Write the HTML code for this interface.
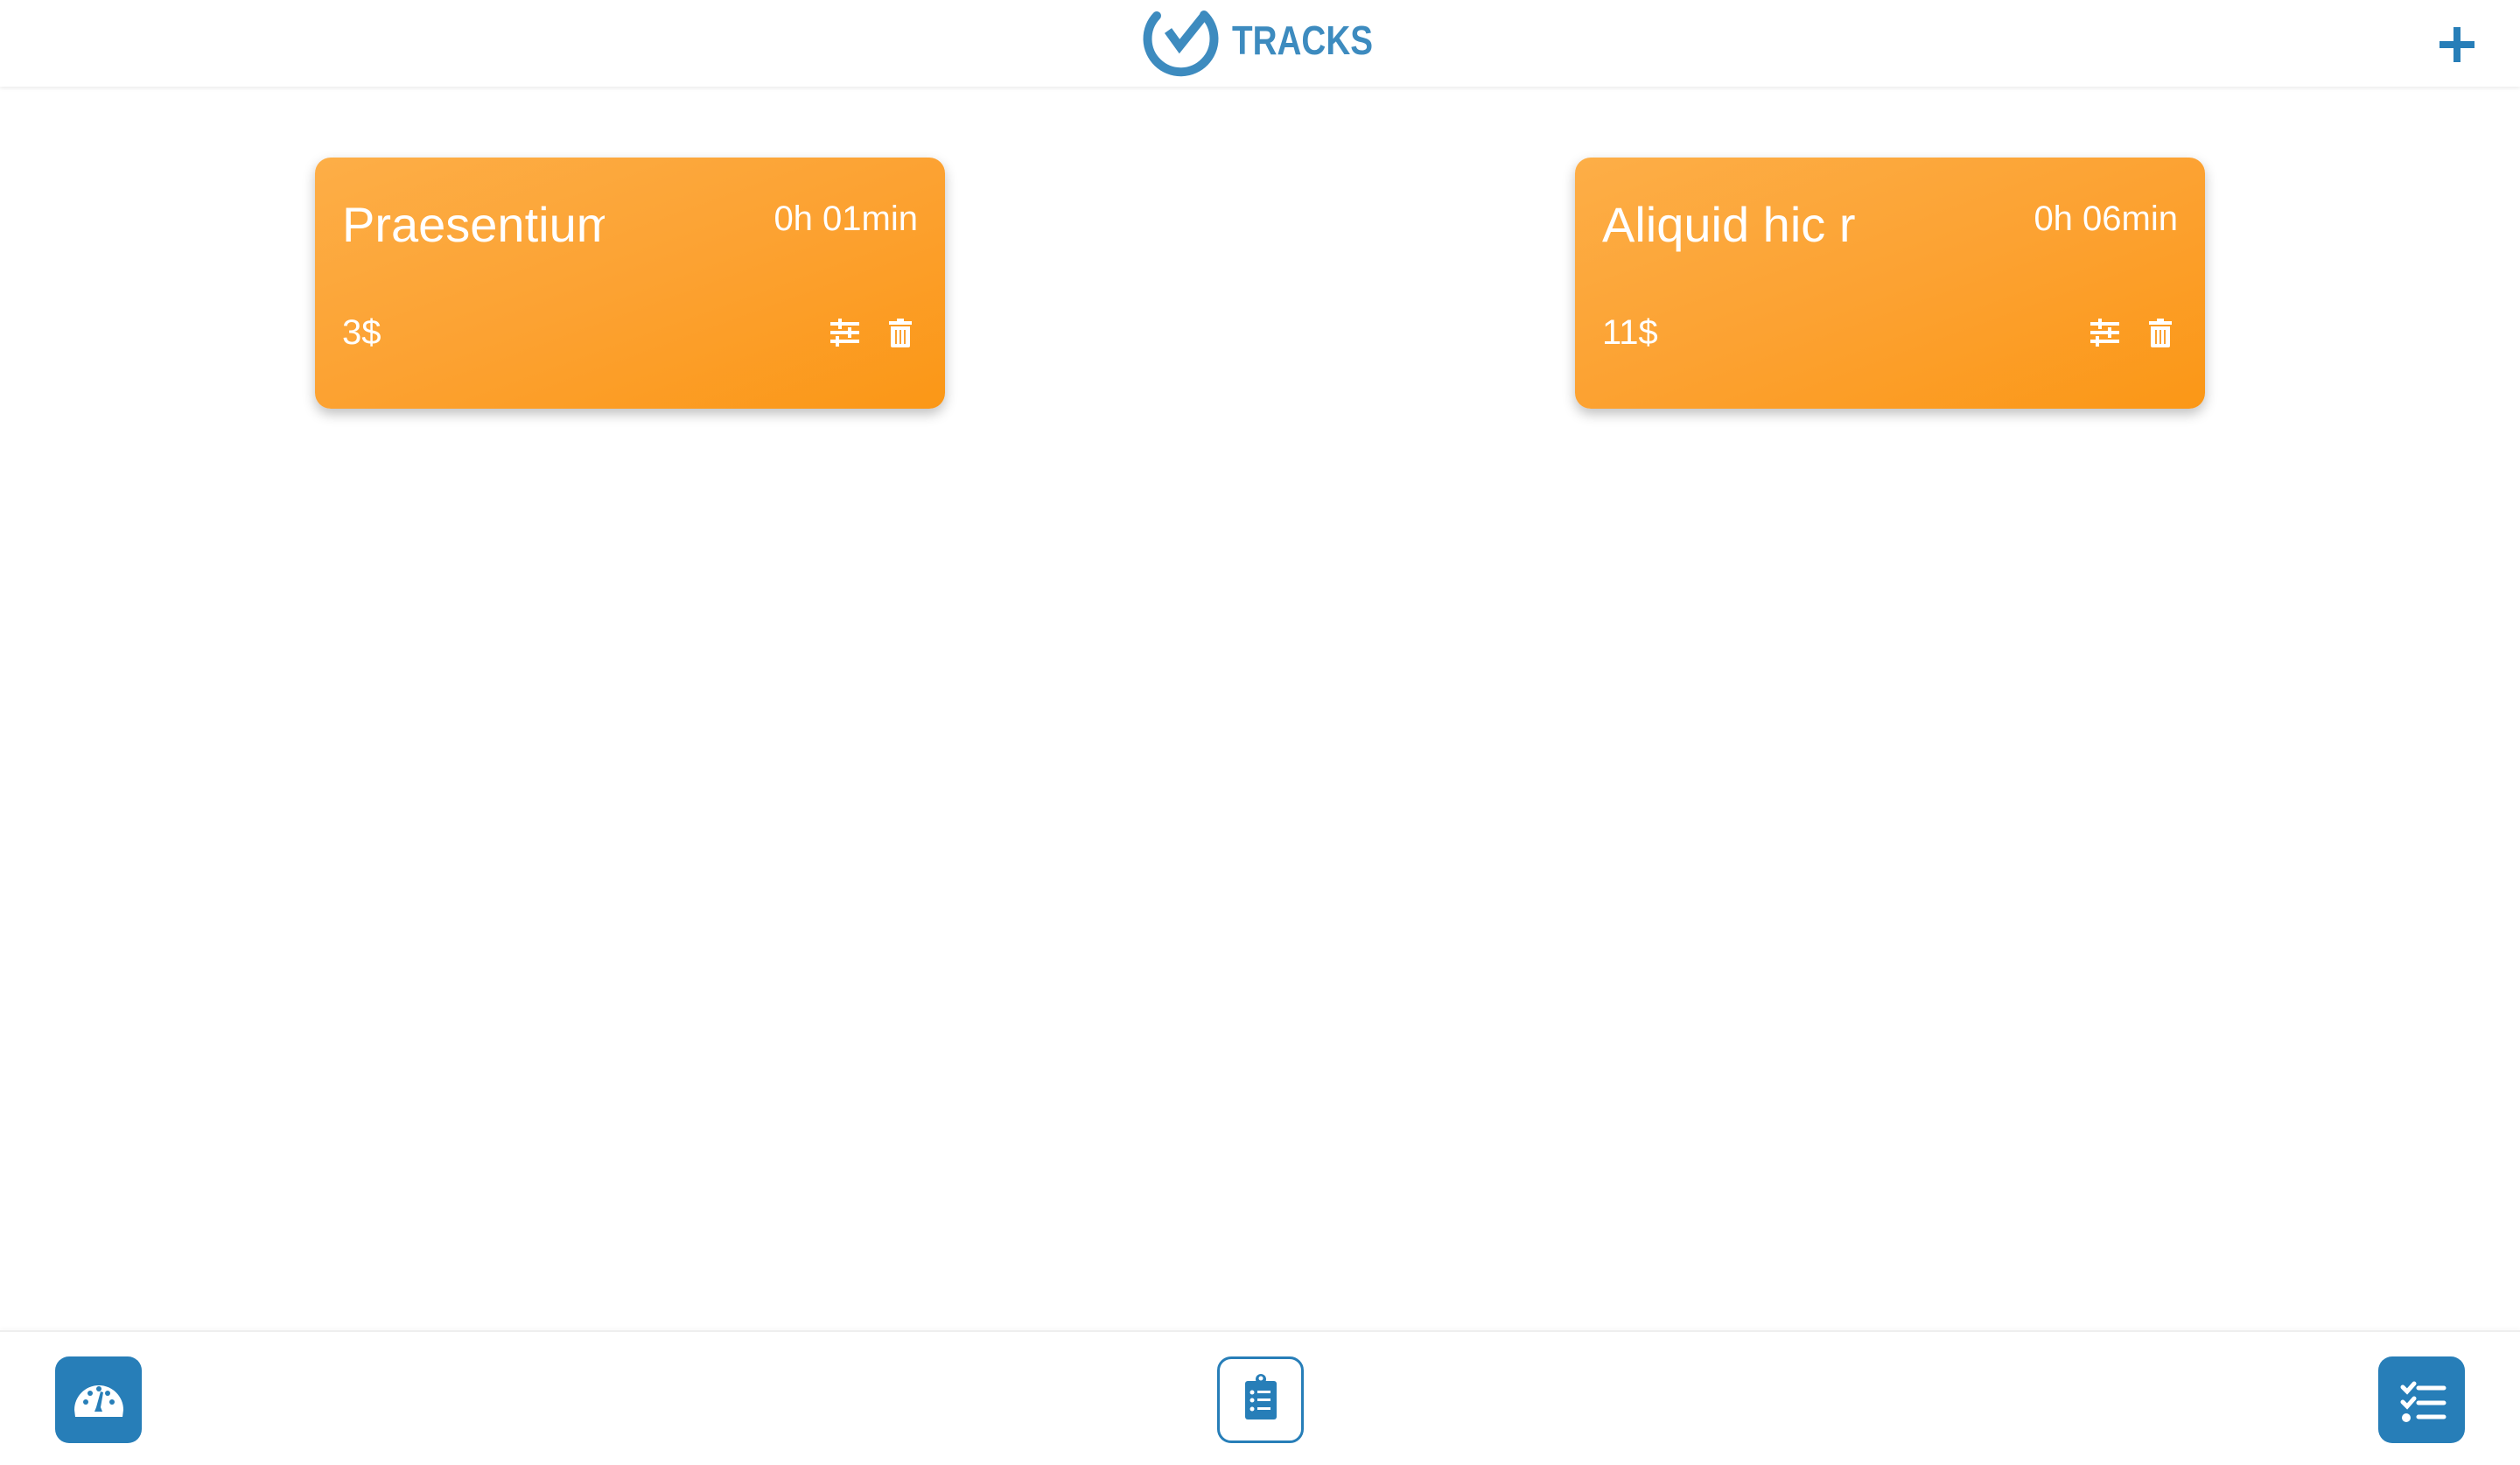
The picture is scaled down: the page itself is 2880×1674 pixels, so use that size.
<!DOCTYPE html>
<html><head><meta charset="utf-8"><style>
html,body{margin:0;padding:0;width:2880px;height:1674px;background:#fff;overflow:hidden;font-family:"Liberation Sans",sans-serif;}
.hdr{position:absolute;left:0;top:0;width:2880px;height:99px;background:#fff;box-shadow:0 2px 4px rgba(0,0,0,0.08);}
.card{position:absolute;top:180px;width:720px;height:287px;border-radius:18px;background:linear-gradient(160deg,#fdae47 0%,#fca232 50%,#fb9716 100%);box-shadow:0 6px 14px rgba(0,0,0,0.25);color:#fff;overflow:hidden}
.title{position:absolute;left:31px;top:44px;font-size:56px;width:300px;white-space:nowrap;overflow:hidden}
.time{position:absolute;right:31px;top:48px;font-size:40px}
.price{position:absolute;left:31px;top:178px;font-size:40px}
.ic{position:absolute;top:184px}
.bot{position:absolute;left:0;top:1520px;width:2880px;height:2px;background:#eee;box-shadow:0 -2px 4px rgba(0,0,0,0.05)}
.btn{position:absolute;top:1550px;width:99px;height:99px;border-radius:16px;background:#277eb8;box-sizing:border-box}
</style></head><body>
<div class="hdr">
<svg style="position:absolute;left:1300px;top:6px" width="100" height="90" viewBox="0 0 100 90">
<path d="M22 12 A38 38 0 1 0 76 11" fill="none" stroke="#3d8bbf" stroke-width="10" stroke-linecap="round"/>
<path d="M35 29 L48 47 L76 12" fill="none" stroke="#3d8bbf" stroke-width="10" stroke-linejoin="miter"/>
</svg>
<div style="position:absolute;left:1408px;top:19px;font-size:46px;font-weight:bold;color:#3d8bbf;transform:scaleX(0.84);transform-origin:0 0">TRACKS</div>
<svg style="position:absolute;left:2786px;top:29px" width="44" height="44" viewBox="0 0 44 44"><path d="M22 2V42M2 22H42" stroke="#277eb8" stroke-width="8"/></svg>
</div>

<div class="card" style="left:360px">
<div class="title">Praesentium</div>
<div class="time">0h 01min</div>
<div class="price">3$</div>
<svg class="ic" style="left:589px" width="34" height="32" viewBox="0 0 34 32"><g fill="#fff"><rect x="0" y="4" width="33" height="4"/><rect x="0" y="14" width="33" height="4"/><rect x="0" y="24" width="33" height="4"/><rect x="9" y="0" width="4" height="12"/><rect x="20" y="10" width="4" height="12"/><rect x="6" y="20" width="4" height="12"/></g></svg>
<svg class="ic" style="left:656px" width="26" height="33" viewBox="0 0 26 33"><g fill="#fff"><rect x="0" y="3" width="26" height="4"/><rect x="9" y="0" width="8" height="4"/><path d="M2 9H24V31Q24 33 22 33H4Q2 33 2 31Z"/></g><g fill="#fca232"><rect x="7" y="13" width="2" height="16"/><rect x="12" y="13" width="2" height="16"/><rect x="17" y="13" width="2" height="16"/></g></svg>
</div>

<div class="card" style="left:1800px">
<div class="title">Aliquid hic r</div>
<div class="time">0h 06min</div>
<div class="price">11$</div>
<svg class="ic" style="left:589px" width="34" height="32" viewBox="0 0 34 32"><g fill="#fff"><rect x="0" y="4" width="33" height="4"/><rect x="0" y="14" width="33" height="4"/><rect x="0" y="24" width="33" height="4"/><rect x="9" y="0" width="4" height="12"/><rect x="20" y="10" width="4" height="12"/><rect x="6" y="20" width="4" height="12"/></g></svg>
<svg class="ic" style="left:656px" width="26" height="33" viewBox="0 0 26 33"><g fill="#fff"><rect x="0" y="3" width="26" height="4"/><rect x="9" y="0" width="8" height="4"/><path d="M2 9H24V31Q24 33 22 33H4Q2 33 2 31Z"/></g><g fill="#fca232"><rect x="7" y="13" width="2" height="16"/><rect x="12" y="13" width="2" height="16"/><rect x="17" y="13" width="2" height="16"/></g></svg>
</div>

<div class="bot"></div>

<div class="btn" style="left:63px">
<svg width="99" height="99" viewBox="0 0 99 99"><path d="M22 61A28 28 0 0 1 78 61L77 69H23Z" fill="#fff"/>
<g fill="#277eb8"><circle cx="35" cy="52" r="3"/><circle cx="40" cy="42" r="3"/><circle cx="50" cy="37" r="3"/><circle cx="60" cy="42" r="3"/><circle cx="65" cy="52" r="3"/><path d="M52 40L55 41L52 58L54 63H45L47 58Z"/></g></svg>
</div>
<div class="btn" style="left:1391px;background:#fff;border:3px solid #277eb8">
<svg width="93" height="93" viewBox="0 0 93 93"><g fill="#277eb8"><rect x="29" y="25" width="36" height="44" rx="3"/><circle cx="47" cy="23" r="6"/></g><circle cx="47" cy="22" r="2.5" fill="#fff"/>
<g fill="#fff"><circle cx="37" cy="38" r="2.5"/><circle cx="37" cy="47" r="2.5"/><circle cx="37" cy="57" r="2.5"/><rect x="43" y="36" width="15" height="3"/><rect x="43" y="45" width="15" height="3"/><rect x="43" y="55" width="15" height="3"/></g></svg>
</div>
<div class="btn" style="left:2718px">
<svg width="99" height="99" viewBox="0 0 99 99"><g fill="none" stroke="#fff" stroke-width="5" stroke-linecap="round"><path d="M28 35L33 40L41 31"/><path d="M28 52L33 57L41 48"/><path d="M46 36H75M46 53H75M46 69H75"/></g><circle cx="32" cy="70" r="5" fill="#fff"/></svg>
</div>
</body></html>
